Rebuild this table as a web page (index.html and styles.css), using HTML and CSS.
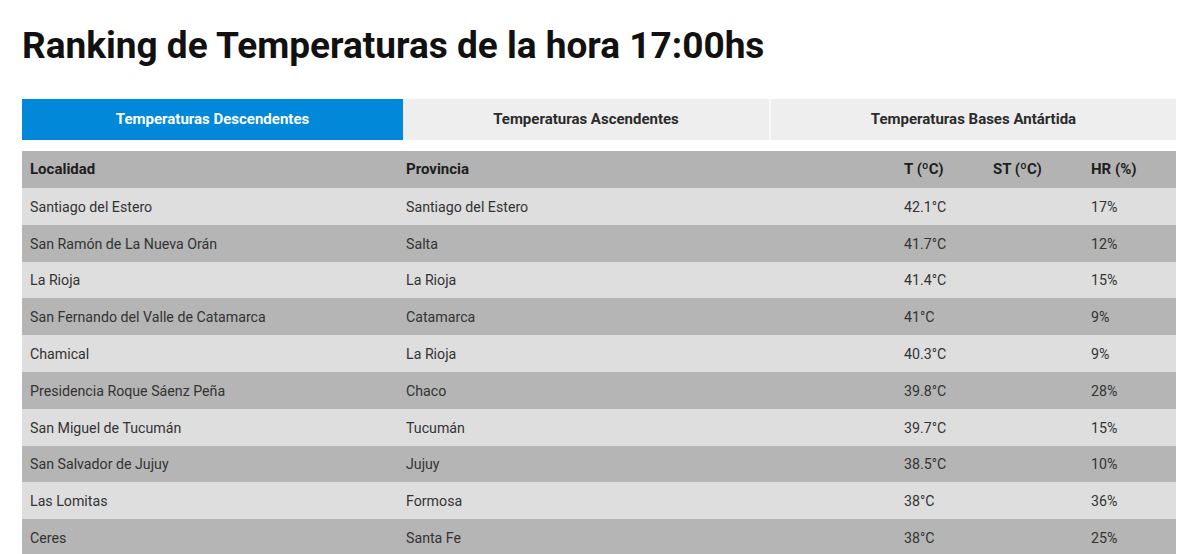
FILE: index.html
```html
<!DOCTYPE html>
<html lang="es">
<head>
<meta charset="utf-8">
<title>Ranking de Temperaturas</title>
<link rel="stylesheet" href="styles.css">
</head>
<body>
<main class="page">
  <h1 class="title">Ranking de Temperaturas de la hora 17:00hs</h1>
  <nav class="tabs">
    <div class="tab tab-active tab-desc">Temperaturas Descendentes</div>
    <div class="tab tab-asc">Temperaturas Ascendentes</div>
    <div class="tab tab-ant">Temperaturas Bases Antártida</div>
  </nav>
  <table class="ranking">
    <thead>
      <tr>
        <th class="c-loc">Localidad</th>
        <th class="c-prov">Provincia</th>
        <th class="c-t">T (ºC)</th>
        <th class="c-st">ST (ºC)</th>
        <th class="c-hr">HR (%)</th>
      </tr>
    </thead>
    <tbody>
      <tr><td>Santiago del Estero</td><td>Santiago del Estero</td><td>42.1°C</td><td></td><td>17%</td></tr>
      <tr><td>San Ramón de La Nueva Orán</td><td>Salta</td><td>41.7°C</td><td></td><td>12%</td></tr>
      <tr><td>La Rioja</td><td>La Rioja</td><td>41.4°C</td><td></td><td>15%</td></tr>
      <tr><td>San Fernando del Valle de Catamarca</td><td>Catamarca</td><td>41°C</td><td></td><td>9%</td></tr>
      <tr><td>Chamical</td><td>La Rioja</td><td>40.3°C</td><td></td><td>9%</td></tr>
      <tr><td>Presidencia Roque Sáenz Peña</td><td>Chaco</td><td>39.8°C</td><td></td><td>28%</td></tr>
      <tr><td>San Miguel de Tucumán</td><td>Tucumán</td><td>39.7°C</td><td></td><td>15%</td></tr>
      <tr><td>San Salvador de Jujuy</td><td>Jujuy</td><td>38.5°C</td><td></td><td>10%</td></tr>
      <tr><td>Las Lomitas</td><td>Formosa</td><td>38°C</td><td></td><td>36%</td></tr>
      <tr><td>Ceres</td><td>Santa Fe</td><td>38°C</td><td></td><td>25%</td></tr>
    </tbody>
  </table>
</main>
</body>
</html>
```

FILE: styles.css
```css
html, body {
  margin: 0;
  padding: 0;
  background: #ffffff;
}

body {
  font-family: Roboto, "Liberation Sans", Arial, sans-serif;
  color: #333333;
}

.page {
  width: 1154px;
  padding: 22px 0 0 22px;
}

.title {
  margin: 0;
  font-size: 37px;
  font-weight: 700;
  line-height: 48px;
  color: #111111;
  letter-spacing: 0;
}

.tabs {
  display: flex;
  margin-top: 29px;
  height: 41px;
}

.tab {
  display: flex;
  align-items: center;
  justify-content: center;
  background: #eeeeee;
  color: #2b2b2b;
  font-size: 15px;
  font-weight: 700;
  padding-bottom: 1px;
  box-sizing: border-box;
}

.tab-desc { width: 381px; }
.tab-asc { width: 368px; border-right: 2px solid #f8f8f8; }
.tab-ant { width: 405px; }

.tab-active {
  background: #0288d8;
  color: #ffffff;
}

.ranking {
  margin-top: 11px;
  width: 1154px;
  border-collapse: collapse;
  table-layout: fixed;
  font-size: 14.2px;
}

.ranking th,
.ranking td {
  box-sizing: border-box;
  text-align: left;
  padding: 0 8px;
  white-space: nowrap;
}

.ranking th {
  background: #b3b3b3;
  color: #1e1e1e;
  font-size: 15px;
  font-weight: 700;
  height: 37px;
  padding-bottom: 1px;
}

.ranking td {
  height: 36.8px;
  padding-top: 1px;
  color: #333333;
}

.ranking tbody tr:nth-child(odd) td { background: #dedede; }
.ranking tbody tr:nth-child(even) td { background: #b5b5b5; }

.c-loc { width: 376px; }
.c-prov { width: 498px; }
.c-t { width: 89px; }
.c-st { width: 98px; }
.c-hr { width: 93px; }
```
